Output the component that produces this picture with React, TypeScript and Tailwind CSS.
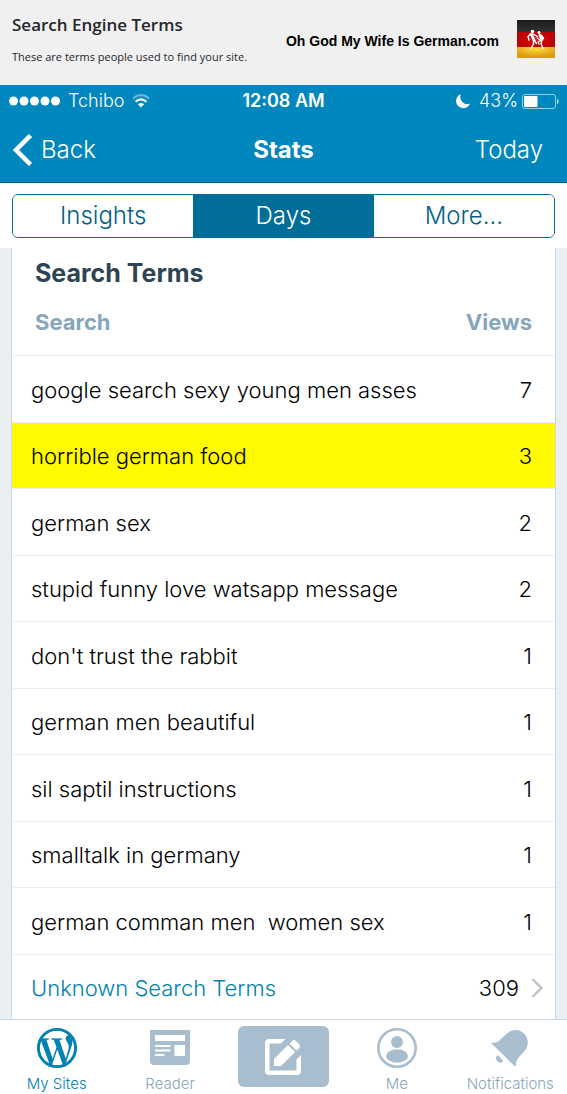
import React, { useState } from 'react';
import { FaWordpressSimple } from 'react-icons/fa';

const tabs = ['Insights', 'Days', 'More...'];

const terms = [
  { term: 'google search sexy young men asses', views: 7 },
  { term: 'horrible german food', views: 3, highlighted: true },
  { term: 'german sex', views: 2 },
  { term: 'stupid funny love watsapp message', views: 2 },
  { term: "don't trust the rabbit", views: 1 },
  { term: 'german men beautiful', views: 1 },
  { term: 'sil saptil instructions', views: 1 },
  { term: 'smalltalk in germany', views: 1 },
  { term: 'german comman men  women sex', views: 1 },
];

function FlagLogo() {
  return (
    <svg width="38" height="38" viewBox="0 0 38 38" aria-hidden="true">
      <defs>
        <linearGradient id="black" x1="0" y1="0" x2="0" y2="1">
          <stop offset="0" stopColor="#1b1b1b" />
          <stop offset="1" stopColor="#333" />
        </linearGradient>
        <radialGradient id="red">
          <stop offset="0" stopColor="#e3100c" />
          <stop offset="1" stopColor="#b80503" />
        </radialGradient>
        <radialGradient id="gold" cx="0.5" cy="0.2" r="0.7">
          <stop offset="0" stopColor="#ffd93c" />
          <stop offset="1" stopColor="#d99a13" />
        </radialGradient>
      </defs>
      <rect width="38" height="13" fill="url(#black)" />
      <rect y="12" width="38" height="15" fill="url(#red)" />
      <rect y="27" width="38" height="11" fill="url(#gold)" />
      <g fill="none" stroke="#fff" strokeLinecap="round" strokeLinejoin="round">
        <path d="M14.500 14.500l2.500 5.500" strokeWidth="3" />
        <path d="M13.500 14l-2.500 2.500 1 3.500M16 14l4.500 2.500M16.500 20.500v3.500l-2.500 4.500M17.500 20.500l2 3" strokeWidth="1.400" />
        <path d="M23 15.500l2 3.500" strokeWidth="3" />
        <path d="M24 15l2.500 3-2.500 2.500-4-2.500M24 20l-3 2 1 2M25 20l-1 3.500 2 5" strokeWidth="1.400" />
      </g>
      <circle cx="15.500" cy="11.500" r="1.700" fill="#fff" />
      <circle cx="22" cy="12.500" r="1.500" fill="#fff" />
    </svg>
  );
}

function StatusBar() {
  return (
    <div className="grid h-8 grid-cols-3 items-center px-2 text-lg text-white">
      <div className="flex items-center gap-2">
        <svg width="52" height="10" viewBox="0 0 52 10" fill="currentColor" aria-hidden="true">
          <circle cx="5.500" cy="5" r="4.500" />
          <circle cx="16" cy="5" r="4.500" />
          <circle cx="26.500" cy="5" r="4.500" />
          <circle cx="37" cy="5" r="4.500" />
          <circle cx="47.500" cy="5" r="4.500" />
        </svg>
        <span className="font-[350]">Tchibo</span>
        <svg width="18" height="14" viewBox="0 0 18 14" fill="none" stroke="currentColor" strokeWidth="2.200" aria-hidden="true">
          <path d="M1 4.800C5.500 0 12.500 0 17 4.800" opacity="0.4" />
          <path d="M3.700 7.800c3-3.200 7.600-3.200 10.600 0" />
          <path d="M9 13.500L5.900 10.300c1.800-1.600 4.400-1.600 6.200 0z" fill="currentColor" stroke="none" />
        </svg>
      </div>
      <div className="text-center font-semibold">12:08 AM</div>
      <div className="flex items-center justify-end gap-1">
        <svg width="16" height="16" viewBox="0 0 16 16" fill="currentColor" className="mr-1" aria-hidden="true">
          <path d="M5.800 1.200A7.200 7.200 0 1 0 15 10.600 7.200 7.200 0 0 1 5.800 1.200z" />
        </svg>
        <span className="font-[350]">43%</span>
        <svg width="37" height="15" viewBox="0 0 37 15" aria-hidden="true">
          <rect x="0.500" y="0.500" width="33" height="14" rx="2.500" fill="none" stroke="#8fd0ec" />
          <rect x="2" y="2" width="13.500" height="11" rx="1" fill="#fff" />
          <path d="M35 5c2.200.500 2.200 4.500 0 5z" fill="#c5e6f4" />
        </svg>
      </div>
    </div>
  );
}

function SitesIcon() {
  return (
    <svg width="40" height="40" viewBox="0 0 40 40" fill="currentColor" aria-hidden="true">
      <circle cx="20" cy="20" r="18.600" fill="none" stroke="currentColor" strokeWidth="2.800" />
      <FaWordpressSimple x="0" y="0" size={40} />
    </svg>
  );
}

function ReaderIcon() {
  return (
    <svg width="40" height="40" viewBox="0 -2 40 40" aria-hidden="true">
      <path d="M0 0h40v31a4 4 0 0 1-4 4H4a4 4 0 0 1-4-4z" fill="currentColor" />
      <path d="M5 5h30v6H5zM24.500 15H35v11H24.500zM5 15h15.500v2H5zM5 19.500h15.500v2H5zM5 24h9.500v2H5z" fill="#fff" />
    </svg>
  );
}

function ComposeIcon() {
  return (
    <svg width="38" height="38" viewBox="0 0 38 38" fill="#fff" aria-hidden="true">
      <path d="M21.500 1L17 5.500H5.500v27h27V21.500L37 17v16a4 4 0 0 1-4 4H5a4 4 0 0 1-4-4V5a4 4 0 0 1 4-4z" />
      <path d="M10 28v-7L24 7l7 7-14 14zM25.500 5.500l2.500-2.500a3 3 0 0 1 4 0l3.200 3.200a3 3 0 0 1 0 4L32.500 12.500z" />
    </svg>
  );
}

function MeIcon() {
  return (
    <svg width="40" height="40" viewBox="0 0 40 40" fill="currentColor" aria-hidden="true">
      <circle cx="20" cy="20" r="18.700" fill="none" stroke="currentColor" strokeWidth="2.600" />
      <circle cx="20" cy="14" r="6" />
      <ellipse cx="20" cy="28" rx="11" ry="6.700" />
    </svg>
  );
}

function BellIcon() {
  return (
    <svg width="40" height="40" viewBox="0 -2 40 40" fill="currentColor" aria-hidden="true">
      <path d="M2.200 12.600C6 13.300 8.500 11.500 11 9L17 3.500C22-1 29-1.200 34 3.500c4.800 4.800 5 11.500 1 17l-5 5.500c-2.800 3-4.400 5.500-4 9.200-.1 1.200-1 1.300-1.800.5L2 14c-.8-.8-.6-1.500.2-1.400z" />
      <path d="M7.500 25.500l5.500 5.500a3.700 3.700 0 0 1-5.500-5.500z" stroke="currentColor" strokeWidth="1" />
    </svg>
  );
}

function App() {
  const [activeTab, setActiveTab] = useState('Days');

  return (
    <div className="min-h-screen bg-white font-['Inter',sans-serif]">
      <header className="flex h-[85px] items-center justify-between bg-[#f0f0f0] px-3 pb-2">
        <div className="font-['Open_Sans',sans-serif] text-[#23282d]">
          <h1 className="text-[17px] leading-6 font-semibold">Search Engine Terms</h1>
          <p className="mt-3 text-[11px] leading-4">These are terms people used to find your site.</p>
        </div>
        <div className="flex items-center gap-[18px]">
          <span className="pt-1 font-['Liberation_Sans',sans-serif] text-sm font-bold text-black">
            Oh God My Wife Is German.com
          </span>
          <FlagLogo />
        </div>
      </header>

      <div className="border-b border-[#005e8c] bg-[#0087be]">
        <StatusBar />
        <nav className="grid h-[65px] grid-cols-3 items-center px-3 text-2xl text-white">
          <button className="flex items-center gap-2 text-left font-[350]">
            <svg width="21" height="32" viewBox="0 0 21 32" fill="none" stroke="currentColor" strokeWidth="4.500" aria-hidden="true">
              <path d="M18.500 1.500L4 16l14.500 14.500" />
            </svg>
            Back
          </button>
          <h2 className="text-center font-bold">Stats</h2>
          <button className="pr-3 text-right font-[350]">Today</button>
        </nav>
      </div>

      <div className="px-3 pt-[11px] pb-[10px]">
        <div className="grid h-11 grid-cols-3 overflow-hidden rounded-md border border-[#006e98] text-2xl font-[350]">
          {tabs.map((tab) => (
            <button
              key={tab}
              onClick={() => setActiveTab(tab)}
              className={tab === activeTab ? 'bg-[#006e98] text-white' : 'bg-white text-[#006088]'}
            >
              {tab}
            </button>
          ))}
        </div>
      </div>

      <main className="bg-[#e9eff3] px-[11px]">
        <div className="border-x border-[#c8d7e1] bg-white">
          <h3 className="px-[23px] pt-[10px] text-[25px] leading-[30px] font-bold text-[#2e4453]">Search Terms</h3>
          <table className="w-full text-[22px] text-black">
            <thead>
              <tr className="h-[67px] border-b border-[#e9eff3] text-[#87a6bc]">
                <th className="pt-[3px] pl-[23px] text-left font-bold">Search</th>
                <th className="pt-[3px] pr-[23px] text-right font-bold">Views</th>
              </tr>
            </thead>
            <tbody className="font-[350]">
              {terms.map((item) => (
                <tr
                  key={item.term}
                  className={
                    item.highlighted
                      ? 'h-[66px] border-b border-[#e9eff3] bg-[#fffa00]'
                      : 'border-b border-[#e9eff3] odd:h-[67px] even:h-[66px]'
                  }
                >
                  <td className="pt-[3px] pl-[19px] whitespace-pre">{item.term}</td>
                  <td className="pt-[3px] pr-[23px] text-right">{item.views}</td>
                </tr>
              ))}
              <tr className="h-[65px]">
                <td className="pt-[3px] pl-[19px]">
                  <a href="#unknown" className="text-[#0082b3]">
                    Unknown Search Terms
                  </a>
                </td>
                <td className="pt-[3px] pr-3">
                  <div className="flex items-center justify-end gap-3">
                    309
                    <svg width="12" height="20" viewBox="0 0 12 20" fill="none" stroke="#c4c6ca" strokeWidth="2.500" aria-hidden="true">
                      <path d="M1.500 1l9 9-9 9" />
                    </svg>
                  </div>
                </td>
              </tr>
            </tbody>
          </table>
        </div>
      </main>

      <footer className="grid h-[75px] grid-cols-5 border-t border-[#c8d7e1] bg-white text-[15px] leading-5 font-[350] text-[#a8bece]">
        <a href="#sites" className="flex flex-col items-center justify-between pt-2 text-[#0082b3]">
          <SitesIcon />
          <span>My Sites</span>
        </a>
        <a href="#reader" className="flex flex-col items-center justify-between pt-2">
          <ReaderIcon />
          <span className="text-[#87a6bc]">Reader</span>
        </a>
        <button aria-label="New post" className="mx-auto mt-1.5 flex h-[61px] w-[91px] items-center justify-center rounded-md bg-[#a8bece]">
          <ComposeIcon />
        </button>
        <a href="#me" className="flex flex-col items-center justify-between pt-2">
          <MeIcon />
          <span className="text-[#87a6bc]">Me</span>
        </a>
        <a href="#notifications" className="flex flex-col items-center justify-between pt-2">
          <BellIcon />
          <span className="text-[#87a6bc]">Notifications</span>
        </a>
      </footer>
    </div>
  );
}

export default App;
